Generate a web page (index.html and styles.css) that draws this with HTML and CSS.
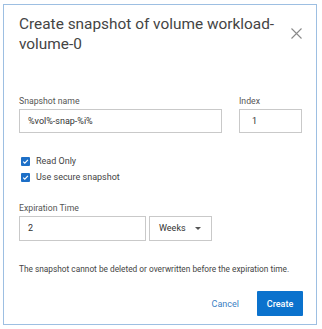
FILE: index.html
```html
<!DOCTYPE html>
<html lang="en">
<head>
    <meta charset="UTF-8">
    <title>Create snapshot</title>
    <link rel="stylesheet" href="styles.css">
</head>
<body>
    <div class="dialog">
        <div class="dialog-header">
            <h2 class="dialog-title">Create snapshot of volume workload-<br>volume-0</h2>
            <button class="close-btn" aria-label="Close">
                <svg width="11" height="11" viewBox="0 0 11 11">
                    <path d="M0.5 0.5L10.5 10.5M10.5 0.5L0.5 10.5" stroke="#8a8a8a" stroke-width="1.1" fill="none"/>
                </svg>
            </button>
        </div>

        <div class="row name-row">
            <div class="field name-field">
                <label class="field-label">Snapshot name</label>
                <div class="text-input">%vol%-snap-%i%</div>
            </div>
            <div class="field index-field">
                <label class="field-label">Index</label>
                <div class="text-input">1</div>
            </div>
        </div>

        <div class="checks">
            <div class="check-row"><span class="check-box"><svg width="9" height="9" viewBox="0 0 9 9"><path d="M2.2 4.6L3.8 6.1L6.9 2.9" stroke="#fff" stroke-width="1.2" fill="none"/></svg></span>Read Only</div>
            <div class="check-row"><span class="check-box"><svg width="9" height="9" viewBox="0 0 9 9"><path d="M2.2 4.6L3.8 6.1L6.9 2.9" stroke="#fff" stroke-width="1.2" fill="none"/></svg></span>Use secure snapshot</div>
        </div>

        <div class="field">
            <label class="field-label">Expiration Time</label>
            <div class="row exp-row">
                <div class="text-input exp-input">2</div>
                <div class="text-input select">Weeks <span class="caret"></span></div>
            </div>
        </div>

        <p class="note">The snapshot cannot be deleted or overwritten before the expiration time.</p>

        <div class="actions">
            <button class="btn btn-link">Cancel</button>
            <button class="btn btn-primary">Create</button>
        </div>
    </div>
</body>
</html>
```

FILE: styles.css
```css
body {
    margin: 0;
    background: #fff;
    font-family: Roboto, "Liberation Sans", sans-serif;
    color: #333;
}
.dialog {
    margin: 4px 0 0 3px;
    width: 314px;
    height: 321px;
    box-sizing: border-box;
    border: 1px solid #9dbfe2;
    padding: 9px 13px 8px 15px;
    display: flex;
    flex-direction: column;
}
.dialog-header {
    display: flex;
    justify-content: space-between;
    align-items: flex-start;
}
.dialog-title {
    margin: 0;
    flex: 1;
    min-width: 0;
    white-space: nowrap;
    font-size: 15.4px;
    line-height: 20px;
    font-weight: 400;
    color: #444;
}
.close-btn {
    border: none;
    background: none;
    padding: 0;
    margin: 14px 1px 0 0;
    line-height: 0;
}
.row {
    display: flex;
}
.name-row {
    margin-top: 41px;
    gap: 17px;
}
.field-label {
    display: block;
    font-size: 8.7px;
    line-height: 12px;
    color: #555;
    margin-bottom: 2px;
}
.text-input {
    box-sizing: border-box;
    height: 24px;
    border: 1px solid #c9c9c9;
    padding: 0 8px;
    font-size: 9px;
    line-height: 22px;
    color: #333;
}
.name-field { width: 203px; }
.index-field { width: 63px; }
.index-field .text-input { padding-left: 12px; }
.checks {
    margin-top: 20px;
}
.check-row {
    display: flex;
    align-items: center;
    height: 16px;
    font-size: 9px;
    color: #444;
    padding-left: 2px;
}
.check-box {
    width: 9px;
    height: 9px;
    background: #1d6fc7;
    border-radius: 1px;
    margin-right: 6px;
    line-height: 0;
}
.checks + .field {
    margin-top: 17px;
}
.exp-row {
    gap: 3px;
}
.exp-input {
    width: 127px;
    height: 25px;
    line-height: 23px;
}
.select {
    width: 63px;
    height: 25px;
    line-height: 23px;
    padding-left: 9px;
    display: flex;
    align-items: center;
    justify-content: space-between;
    padding-right: 10px;
}
.caret {
    width: 0;
    height: 0;
    border-left: 3px solid transparent;
    border-right: 3px solid transparent;
    border-top: 3px solid #555;
}
.note {
    margin: 22px 0 0;
    font-size: 8.3px;
    line-height: 12px;
    color: #444;
}
.actions {
    margin-top: 16px;
    display: flex;
    justify-content: flex-end;
    gap: 9px;
}
.btn {
    font-family: inherit;
    font-size: 9px;
    height: 25px;
    border: none;
    padding: 0 9px;
    background: none;
}
.btn-link {
    color: #3c7fc4;
}
.btn-primary {
    width: 46px;
    background: #0b72cd;
    color: #fff;
    font-weight: 500;
    border-radius: 1px;
}
```
